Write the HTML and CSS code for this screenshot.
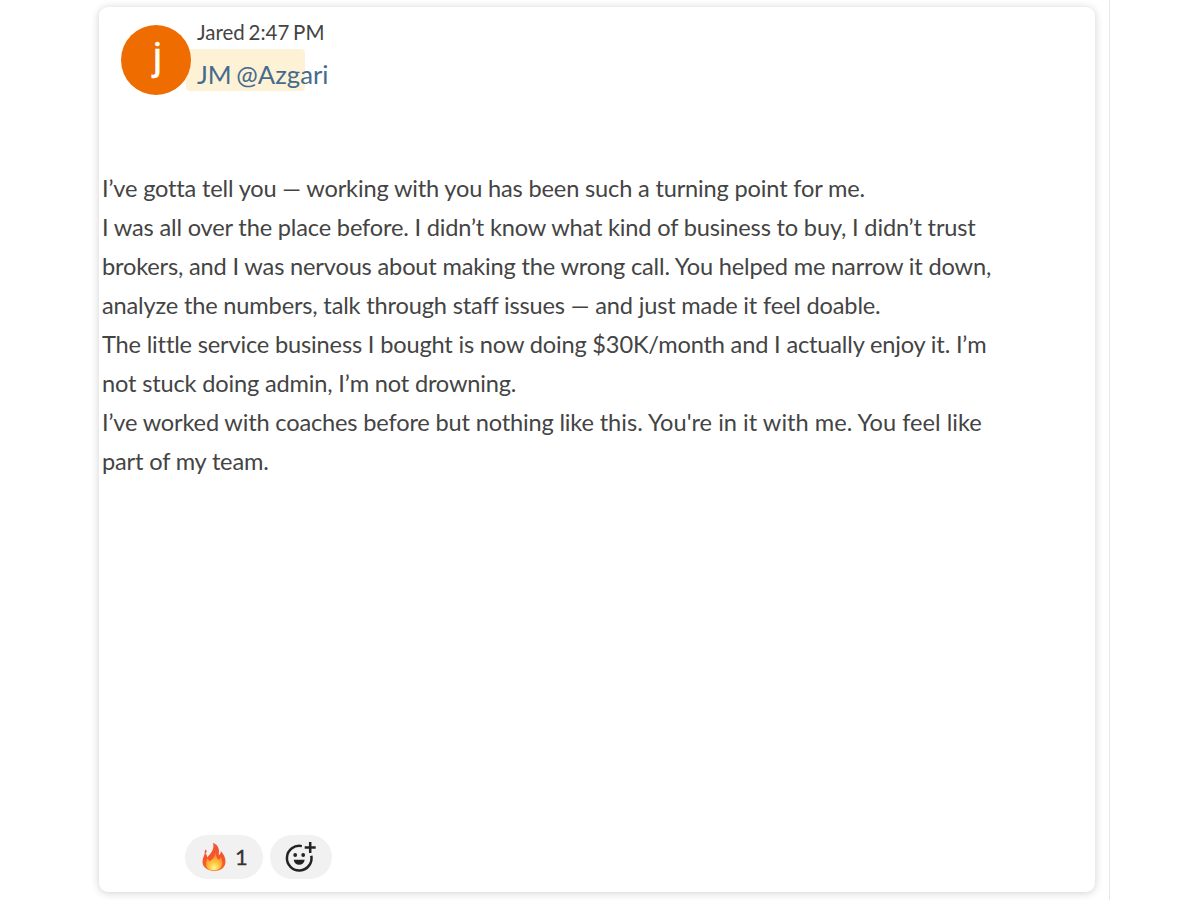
FILE: index.html
```
<!DOCTYPE html>
<html lang="en">
<head>
  <meta charset="UTF-8" />
  <meta name="viewport" content="width=device-width, initial-scale=1.0"/>
  <title>Jared - Message</title>
  <link rel="stylesheet" href="styles.css">
</head>
<body>
  <div class="page">
    <div class="card">
      <div class="header">
        <div class="avatar">j</div>
        <div class="info">
          <div class="author">Jared 2:47 PM</div>
          <div class="mention">JM @Azgari</div>
        </div>
      </div>

      <div class="message">
        <p>I’ve gotta tell you — working with you has been such a turning point for me.</p>
        <p>I was all over the place before. I didn’t know what kind of business to buy, I didn’t trust<br>
        brokers, and I was nervous about making the wrong call. You helped me narrow it down,<br>
        analyze the numbers, talk through staff issues — and just made it feel doable.</p>
        <p>The little service business I bought is now doing $30K/month and I actually enjoy it. I’m<br>
        not stuck doing admin, I’m not drowning.</p>
        <p>I’ve worked with coaches before but nothing like <span class="loose">this. You're in it with me. You feel like</span><br>
        part of my team.</p>
      </div>

      <div class="reactions">
        <button class="reaction fire">
          <svg width="26" height="30" viewBox="0 0 26 30">
            <defs>
              <linearGradient id="flame" x1="0" y1="0" x2="0" y2="1">
                <stop offset="0" stop-color="#f2552f"/>
                <stop offset="0.6" stop-color="#f4562c"/>
                <stop offset="1" stop-color="#f8692b"/>
              </linearGradient>
              <radialGradient id="core" cx="0.5" cy="0.85" r="0.7">
                <stop offset="0" stop-color="#fff6a0"/>
                <stop offset="0.4" stop-color="#ffcb3f"/>
                <stop offset="1" stop-color="#ff8a2c"/>
              </radialGradient>
            </defs>
            <path fill="url(#flame)" d="M12 .8c3.800 1.500 6 4.700 6 8.200 0 1.800-.3 3-.2 4.200 1.300-.5 2-2.200 2-4.200 3 3 4.700 6.800 4.700 10.500 0 5.800-4.500 9.500-11 9.500S1.500 25.500 1.500 20c0-3.400 1.600-6 2.300-9 1.500 1 2.200 2.400 2.400 4.200C10 11.500 13.800 7 12 .8z"/>
            <path fill="#f4573c" d="M4.700 7.400c1.500 1.400 1.300 3-.5 4.300-.9-1.500-.7-2.900.5-4.300z"/>
            <path fill="url(#core)" d="M14.300 10.500c.6 3.300 1.600 5 2.800 7.200 1.300-.4 2.300-1.300 2.800-2.600 1.500 3.500 2 6.300.6 9.200-1.300 2.700-4 4.100-7.500 4.100-5 0-8-2.500-8-6.400 0-2.200.9-3.800 1.300-5.500 1.100.6 1.700 1.500 2.100 2.800 3.300-2 5.800-4.800 5.900-8.800z"/>
          </svg>
          <span class="count">1</span>
        </button>
        <button class="reaction add">
          <svg width="32" height="32" viewBox="0 0 32 32" fill="none" stroke="#232323" stroke-width="2.500">
            <path d="M17.800 5.100A12.300 12.300 0 1 0 27.300 14.700"/>
            <path d="M26.200 1v11M20.700 6.500h11"/>
            <circle cx="11.200" cy="14" r="1.900" fill="#232323" stroke="none"/>
            <circle cx="19.200" cy="14" r="1.900" fill="#232323" stroke="none"/>
            <path d="M9.700 18.800h11c-.5 3.400-2.600 5-5.500 5s-5-1.600-5.500-5z" fill="#232323" stroke="none"/>
          </svg>
        </button>
      </div>
    </div>
  </div>
</body>
</html>
```
FILE: styles.css
```
* {
  box-sizing: border-box;
}

body {
  font-family: Lato, "Open Sans", sans-serif;
  font-variant-ligatures: no-common-ligatures;
  background: #fff;
  margin: 0;
  color: #444;
}

.page {
  width: 1110px;
  height: 900px;
  padding: 7px 14px 0 99px;
  border-right: 1px solid #e8e8e8;
  overflow: hidden;
}

.card {
  display: flex;
  flex-direction: column;
  height: 885px;
  background: #fff;
  border-radius: 9px;
  box-shadow: 0 1px 8px rgba(0, 0, 0, 0.19);
}

.header {
  display: flex;
  padding: 13px 0 0 22px;
}

.avatar {
  z-index: 1;
  width: 70px;
  height: 70px;
  margin-top: 5px;
  border-radius: 50%;
  background: #ef6c00;
  color: #fff;
  font-family: Roboto, sans-serif;
  font-size: 38px;
  line-height: 65px;
  text-align: center;
  text-indent: 3px;
  -webkit-text-stroke: 0.5px #fff;
}

.author {
  padding-left: 6px;
  font-size: 20.5px;
  line-height: 25px;
  word-spacing: -1.5px;
}

.mention {
  width: 119px;
  height: 42px;
  margin: 4px 0 0 -5px;
  padding-left: 11px;
  border-radius: 4px;
  background: #fef2d6;
  color: #456b8c;
  font-size: 25.7px;
  line-height: 51px;
  white-space: nowrap;
  word-spacing: -2px;
}

.message {
  padding: 74px 0 0 3px;
  font-size: 23.6px;
  line-height: 39px;
  white-space: nowrap;
  letter-spacing: -0.17px;
}

.message p {
  margin: 0;
}

.loose {
  letter-spacing: 0.02px;
}

.reactions {
  display: flex;
  gap: 7px;
  margin-top: auto;
  padding: 0 0 13px 86px;
}

.reaction {
  display: flex;
  align-items: center;
  height: 44px;
  padding: 0;
  border: none;
  border-radius: 22px;
  background: #f1f1f1;
  cursor: pointer;
}

.fire {
  width: 78px;
  padding-left: 16px;
}

.count {
  margin-left: 8px;
  padding-bottom: 1px;
  color: #333;
  font-family: Lato, sans-serif;
  font-size: 22px;
  -webkit-text-stroke: 0.3px #333;
}

.add {
  width: 62px;
  padding-left: 14px;
}
```
